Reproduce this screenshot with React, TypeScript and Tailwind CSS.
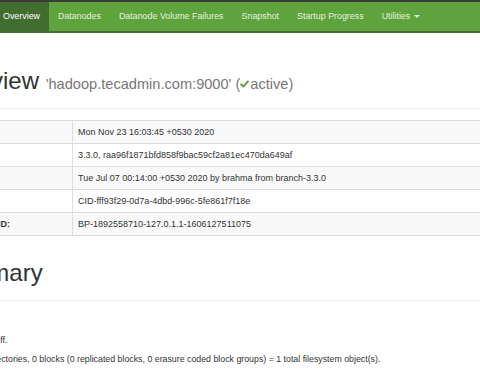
import React from 'react';

const navItems = ['Datanodes', 'Datanode Volume Failures', 'Snapshot', 'Startup Progress'];

const overviewRows: [string, string][] = [
  ['Started:', 'Mon Nov 23 16:03:45 +0530 2020'],
  ['Version:', '3.3.0, raa96f1871bfd858f9bac59cf2a81ec470da649af'],
  ['Compiled:', 'Tue Jul 07 00:14:00 +0530 2020 by brahma from branch-3.3.0'],
  ['Cluster ID:', 'CID-fff93f29-0d7a-4dbd-996c-5fe861f7f18e'],
  ['Block Pool ID:', 'BP-1892558710-127.0.1.1-1606127511075'],
];

function CheckIcon() {
  return (
    <svg width="9" height="8" viewBox="0 0 10 9" className="inline-block mr-[1px] -mt-[2px]">
      <path d="M1.2 5 L3.8 7.4 L8.8 1.6" fill="none" stroke="#5fa33e" strokeWidth="2.2" strokeLinecap="round" strokeLinejoin="round" />
    </svg>
  );
}

export default function App() {
  return (
    <div className="w-[480px] h-[370px] overflow-hidden bg-white font-['Liberation_Sans',Arial,sans-serif] text-[#333]">
      {/* navbar */}
      <div className="h-[33px] border-t-2 border-t-[#3a3a3a] border-b-2 border-b-[#44702f] bg-[#5fa33e] flex text-[8.9px]">
        <div className="-ml-[6px] pl-[9px] pr-[9px] bg-[#426d31] text-white flex items-center">Overview</div>
        {navItems.map((item) => (
          <div key={item} className="px-[9px] flex items-center text-[#e3f2da]">
            {item}
          </div>
        ))}
        <div className="px-[9px] flex items-center text-[#e3f2da] gap-[4px]">
          Utilities
          <span className="w-0 h-0 border-l-[3px] border-r-[3px] border-t-[3px] border-l-transparent border-r-transparent border-t-[#e3f2da]" />
        </div>
      </div>

      <div className="-ml-[63px] w-[620px]">
        {/* page header */}
        <div className="pt-[35px] pb-[14px] border-b border-[#eee]">
          <h1 className="ml-[2px] text-[24px] leading-[1.1] font-medium">
            Overview{' '}
            <span className="text-[14.6px] text-[#777] font-normal">
              'hadoop.tecadmin.com:9000' (<CheckIcon />active)
            </span>
          </h1>
        </div>

        {/* overview table */}
        <div className="mt-[11px] border-t border-[#ddd] text-[9px]">
          {overviewRows.map(([label, value], i) => (
            <div
              key={label}
              className={`flex h-[23px] border-b border-[#ddd] ${i % 2 === 0 ? 'bg-[#f9f9f9]' : 'bg-white'}`}
            >
              <div className="w-[136px] pl-[12px] pr-[5px] flex items-center font-bold border-r border-[#ddd]">{label}</div>
              <div className="flex-1 px-[5px] flex items-center">{value}</div>
            </div>
          ))}
        </div>

        {/* summary header */}
        <div className="pt-[24px] pb-[13px] border-b border-[#eee]">
          <h1 className="ml-[3px] text-[24px] leading-[1.1] font-medium">Summary</h1>
        </div>

        <div className="pt-[14px] pl-[7px] text-[8.8px] leading-[13px] flex flex-col gap-[6px]">
          <p>Security is off.</p>
          <p>Safemode is off.</p>
          <p>1 files and directories, 0 blocks (0 replicated blocks, 0 erasure coded block groups) = 1 total filesystem object(s).</p>
        </div>
        <div className="mt-[5px] border-t border-[#ccc]" />
      </div>
    </div>
  );
}
